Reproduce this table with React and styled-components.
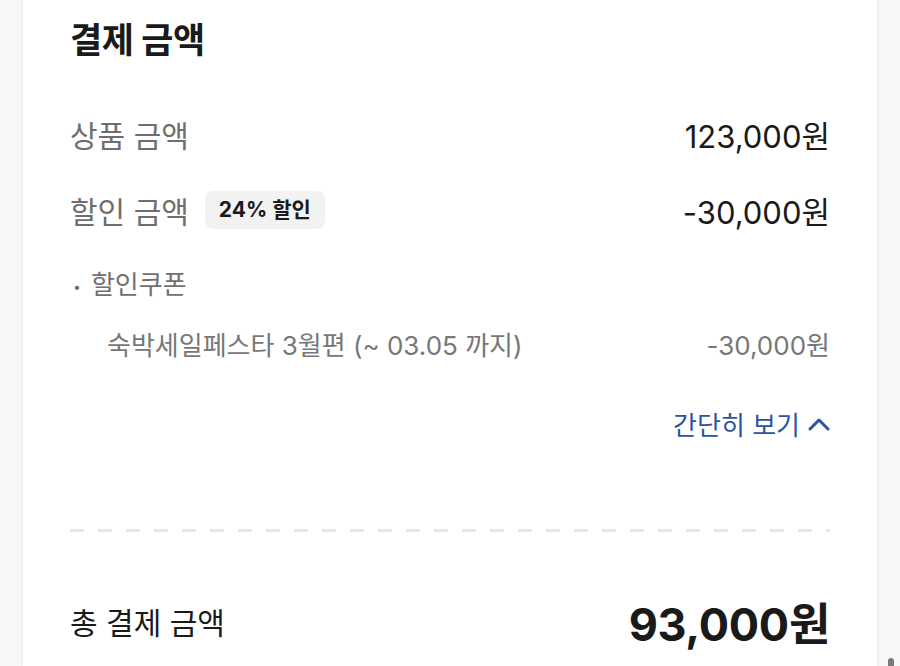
import React from 'react';
import styled, { createGlobalStyle } from 'styled-components';

const GlobalStyle = createGlobalStyle`
    html, body {
        margin:0;
        padding:0;
        background:#f7f7f7;
        font-family:Inter, "Noto Sans CJK KR", sans-serif;
        overflow:hidden;
    }
`;

const Page = styled.div`
    display:flex;
    justify-content:center;
    height:666px;
    padding:0 23px;
    box-sizing:border-box;
`;

const Card = styled.section`
    flex:1;
    background:#ffffff;
    padding:12px 47px 0;
    box-shadow:1px 0 3px rgba(0, 0, 0, 0.06), -1px 0 3px rgba(0, 0, 0, 0.04);
`;

const Title = styled.h2`
    margin:0;
    font-size:35px;
    font-weight:700;
    color:#1a1a1a;
    line-height:56px;
    letter-spacing:-0.5px;
`;

const Row = styled.div`
    display:flex;
    flex-direction:row;
    align-items:center;
    justify-content:space-between;
    margin-top:${p => p.top || 0}px;
    height:${p => p.height || 48}px;
`;

const LabelWrap = styled.div`
    display:flex;
    flex-direction:row;
    align-items:center;
`;

const Label = styled.span`
    font-size:30px;
    color:#6e6e6e;
`;

const Amount = styled.span`
    font-size:31px;
    color:#1a1a1a;
`;

const Badge = styled.span`
    display:inline-block;
    margin-left:16px;
    padding:0 14px;
    height:38px;
    line-height:38px;
    background:#f2f2f2;
    border-radius:8px;
    font-size:21px;
    font-weight:700;
    color:#1a1a1a;
`;

const Bullet = styled.span`
    font-size:26px;
    color:#707070;
    &:before {
        content:"•";
        font-size:14px;
        margin:0 10px 0 3px;
        vertical-align:middle;
    }
`;

const CouponName = styled.span`
    padding-left:37px;
    font-size:26px;
    color:#777777;
`;

const CouponAmount = styled.span`
    font-size:26px;
    color:#777777;
`;

const LinkRow = styled.div`
    display:flex;
    justify-content:flex-end;
    margin-top:38px;
`;

const Toggle = styled.button`
    display:flex;
    align-items:center;
    gap:8px;
    padding:0;
    border:none;
    background:none;
    font-family:inherit;
    font-size:26px;
    color:#2a55a3;
    cursor:pointer;
`;

const Divider = styled.hr`
    margin:87px 0 0;
    height:3px;
    border:none;
    background-image:linear-gradient(to right, #e6e6e6 50%, transparent 50%);
    background-size:28px 3px;
    background-repeat:repeat-x;
`;

const TotalLabel = styled.span`
    font-size:30px;
    color:#1a1a1a;
`;

const TotalAmount = styled.span`
    font-size:45px;
    font-weight:700;
    color:#1a1a1a;
    letter-spacing:-0.3px;
`;

const ScrollThumb = styled.div`
    position:fixed;
    right:6px;
    bottom:-10px;
    width:6px;
    height:18px;
    border-radius:3px;
    background:#7a7a7a;
`;

function Chevron(){
    return (
        <svg width="22" height="14" viewBox="0 0 22 14" fill="none">
            <path d="M2 12 L11 3 L20 12" stroke="#2a55a3" strokeWidth="3" strokeLinecap="round" strokeLinejoin="round" />
        </svg>
    );
}

function App(){
    return (
        <Page>
            <GlobalStyle />
            <Card>
                <Title>결제 금액</Title>
                <Row top={42}>
                    <Label>상품 금액</Label>
                    <Amount>123,000원</Amount>
                </Row>
                <Row top={28}>
                    <LabelWrap>
                        <Label>할인 금액</Label>
                        <Badge>24% 할인</Badge>
                    </LabelWrap>
                    <Amount>-30,000원</Amount>
                </Row>
                <Row top={24}>
                    <Bullet>할인쿠폰</Bullet>
                </Row>
                <Row top={13}>
                    <CouponName>숙박세일페스타 3월편 (~ 03.05 까지)</CouponName>
                    <CouponAmount>-30,000원</CouponAmount>
                </Row>
                <LinkRow>
                    <Toggle>간단히 보기 <Chevron /></Toggle>
                </LinkRow>
                <Divider />
                <Row top={64} height={50}>
                    <TotalLabel>총 결제 금액</TotalLabel>
                    <TotalAmount>93,000원</TotalAmount>
                </Row>
            </Card>
            <ScrollThumb />
        </Page>
    );
}

export default App;
